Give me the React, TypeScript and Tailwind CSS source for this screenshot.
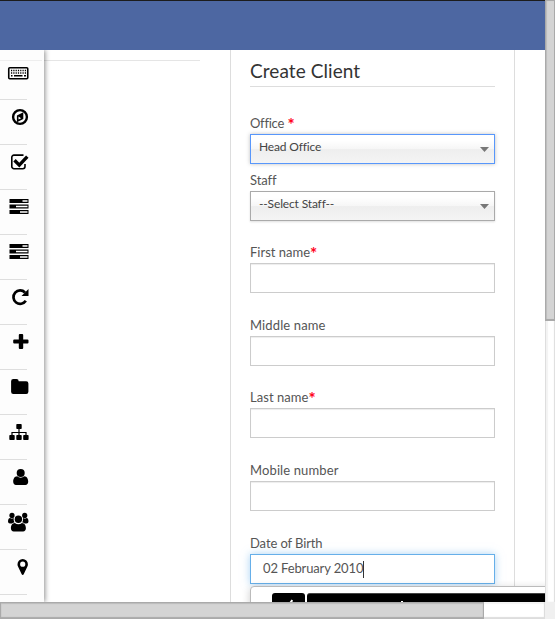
import React from "react";

const Keyboard = () => (
  <>
    <rect x="8.75" y="12.75" width="19" height="11" rx="1" fill="none" stroke="#000" strokeWidth="1.6" />
    <path d="M11 15.500h15M11 18h15" stroke="#000" strokeWidth="1.4" strokeDasharray="1.2 1.1" />
    <path d="M11 20.800h1.500M14 20.800h8.500M24 20.800h2" stroke="#000" strokeWidth="1.400" />
  </>
);

const Compass = () => (
  <>
    <circle cx="20" cy="17" r="6.900" fill="none" stroke="#000" strokeWidth="2.400" />
    <path fillRule="evenodd" d="M23.300 12.200v6.800l-6.400 3.200v-6.800zM18.500 16.600v2.900l2.600-1.300z" />
  </>
);

const Check = () => (
  <>
    <path d="M23.500 10.100H14a2.200 2.200 0 0 0-2.200 2.200v9.200a2.200 2.200 0 0 0 2.200 2.200h8.800a2.200 2.200 0 0 0 2.200-2.200v-2.600" fill="none" stroke="#000" strokeWidth="1.600" />
    <path d="M14.500 15.300l4.800 4.800 8-8.400" fill="none" stroke="#000" strokeWidth="3.400" />
  </>
);

const Tasks = () => (
  <>
    <path d="M9.500 9h19v4h-19zM9.500 14.500h19v4h-19zM9.500 20h19v4h-19z" />
    <path d="M22.500 10.300h5v1.400h-5zM16 15.800h11.500v1.400H16zM20 21.300h7.500v1.400H20z" fill="#fff" />
  </>
);

const Repeat = () => (
  <>
    <path d="M25.800 20.800a6.700 6.700 0 1 1-.8-8.300" fill="none" stroke="#000" strokeWidth="2.700" />
    <path d="M28.500 9v7h-7z" />
  </>
);

const Plus = () => (
  <path d="M19.800 9h2.400q1 0 1 1v4.600h4.300q1 0 1 1v1.900q0 1-1 1h-4.300v4.500q0 1-1 1h-2.400q-1 0-1-1v-4.500h-4.600q-1 0-1-1v-1.900q0-1 1-1h4.600V10q0-1 1-1z" />
);

const Folder = () => (
  <path d="M13.300 9h3.200a2.200 2.200 0 0 1 2.200 2.200h7.500a2.200 2.200 0 0 1 2.200 2.200v8.300a2.200 2.200 0 0 1-2.200 2.200H13.300a2.200 2.200 0 0 1-2.200-2.200V11.200A2.200 2.200 0 0 1 13.300 9z" />
);

const Sitemap = () => (
  <>
    <path d="M19 14v7M12 21v-3.500h14V21" fill="none" stroke="#000" strokeWidth="1.200" />
    <rect x="16.300" y="9" width="5.400" height="5" rx=".8" />
    <rect x="9.300" y="20" width="5.400" height="5" rx=".8" />
    <rect x="16.300" y="20" width="5.400" height="5" rx=".8" />
    <rect x="23.200" y="20" width="5.400" height="5" rx=".8" />
  </>
);

const User = () => (
  <>
    <circle cx="20.700" cy="13" r="4" />
    <path d="M17.200 16.200a5 5 0 0 0 7 0c2.900.2 4 2.800 4 5.600 0 2-1.100 3.200-2.800 3.200h-9.400c-1.700 0-2.800-1.200-2.800-3.200 0-2.800 1.100-5.400 4-5.600z" />
  </>
);

const Users = () => (
  <>
    <circle cx="12" cy="10.400" r="2.600" />
    <circle cx="24.700" cy="10.400" r="2.600" />
    <path d="M10.100 12.900q2.100 1.100 3.600.2-.5 2.200.7 4.500-1.500.1-2.400 1h-2q-2-.1-2-2 0-3.500 2.100-3.700zM26.600 12.900q-2.100 1.100-3.600.2.500 2.200-.7 4.500 1.500.1 2.400 1h1.700q2.100-.1 2.100-2 0-3.500-1.900-3.700z" />
    <circle cx="18.400" cy="14.300" r="3.700" />
    <path d="M14.900 17.900a5 5 0 0 0 7 0c2.900.2 4 2.700 4 5.400 0 2-1.100 3.200-2.800 3.200h-9.400c-1.700 0-2.800-1.200-2.800-3.200 0-2.700 1.100-5.200 4-5.400z" />
  </>
);

const Marker = () => (
  <path fillRule="evenodd" d="M22.700 9a5.200 5.200 0 0 1 5.200 5.200c0 .9-.1 1.500-.5 2.300l-3.700 7.800a1.100 1.100 0 0 1-2 0L18 16.500c-.4-.8-.5-1.400-.5-2.300A5.200 5.200 0 0 1 22.700 9zm0 2.600a2.600 2.600 0 1 0 0 5.200 2.600 2.600 0 0 0 0-5.200z" />
);

const menu = [Keyboard, Compass, Check, Tasks, Tasks, Repeat, Plus, Folder, Sitemap, User, Users, Marker];

function Sidebar() {
  return (
    <nav className="relative h-[552px] w-[44px] shrink-0 bg-[#fdfdfd] pt-[5px] shadow-[1px_0_5px_rgba(0,0,0,0.45)]">
      {menu.map((Icon, i) => (
        <div key={i} className="h-[45px] w-[27px] border-b border-[#dedede]">
          <svg className="block h-[44px] w-[30px] max-w-none overflow-visible" viewBox="0 0 30 44">
            <Icon />
          </svg>
        </div>
      ))}
      <div className="absolute top-[10px] left-0 h-px w-[42px] bg-[#eeeeee]" />
    </nav>
  );
}

const Star = () => <span className="inline-block h-[20px] align-top text-[17px] leading-[26px] font-bold text-[#ff0019]">*</span>;

function Label({ text, required = false, spaced = false, tracking }: { text: string; required?: boolean; spaced?: boolean; tracking: string }) {
  return (
    <div className="h-[22px] text-[13px] leading-[22px] whitespace-pre text-[#555]">
      <span className={tracking}>{text}</span>
      {spaced && " "}
      {required && <Star />}
    </div>
  );
}

function Select({ value, focused = false }: { value: string; focused?: boolean }) {
  return (
    <div
      className={`flex h-[30px] items-center justify-between border bg-[linear-gradient(#fff_20%,#f6f6f6_50%,#eee_52%,#f4f4f4)] pr-[5px] pb-[4px] pl-[8px] ${
        focused ? "border-[#5897fb] shadow-[0_0_4px_rgba(0,0,0,0.25)]" : "border-[#aaa] shadow-[0_1px_2px_rgba(0,0,0,0.13)]"
      }`}
    >
      <span className="text-[12px] leading-[20px] tracking-[-0.15px] text-[#444]">{value}</span>
      <svg className="mt-[4px] h-[5px] w-[9px]" viewBox="0 0 9 5">
        <path d="M0 0h9L4.500 5z" fill="#777" />
      </svg>
    </div>
  );
}

const Field = () => <div className="h-[30px] border border-[#ccc] bg-white shadow-[inset_0_1px_1px_rgba(0,0,0,0.075)]" />;

export default function App() {
  return (
    <div className="h-[619px] w-[555px] overflow-hidden bg-white font-['Lato',sans-serif]">
      <div className="flex h-[602px]">
        <div className="h-[602px] w-[545px] overflow-hidden">
          <header className="relative z-10 h-[50px] border-t border-[#1c1c1c] bg-[#4d67a2]" />
          <div className="flex h-[552px]">
            <Sidebar />
            <div className="w-[186px] shrink-0 pt-[10px]">
              <div className="h-px w-[156px] bg-[#e5e5e5]" />
            </div>
            <main className="w-[285px] shrink-0 border-x border-[#ddd] px-[19px]">
              <h1 className="h-[37px] border-b border-[#ddd] pt-[9px] text-[19px] leading-[24px] tracking-[0.08px] whitespace-nowrap text-[#333]">Create Client</h1>
              <div className="pt-[25px]">
                <Label text="Office" required spaced tracking="tracking-[-0.25px]" />
                <Select value="Head Office" focused />
              </div>
              <div className="pt-[5px]">
                <Label text="Staff" tracking="tracking-[-0.1px]" />
                <Select value="--Select Staff--" />
              </div>
              <div className="pt-[20px]">
                <Label text="First name" required tracking="tracking-[0px]" />
                <Field />
              </div>
              <div className="pt-[21px]">
                <Label text="Middle name" tracking="tracking-[0.13px]" />
                <Field />
              </div>
              <div className="pt-[20px]">
                <Label text="Last name" required tracking="tracking-[0.05px]" />
                <Field />
              </div>
              <div className="pt-[21px]">
                <Label text="Mobile number" tracking="tracking-[0.12px]" />
                <Field />
              </div>
              <div className="pt-[21px]">
                <Label text="Date of Birth" tracking="tracking-[-0.1px]" />
                <div className="flex h-[30px] items-center border border-[#66afe9] bg-white pl-[12px] shadow-[0_0_8px_rgba(102,175,233,0.55)]">
                  <span className="text-[13px] tracking-[-0.13px] whitespace-nowrap text-[#555]">02 February 2010</span>
                  <span className="h-[17px] w-px bg-[#333]" />
                </div>
              </div>
              <div className="relative mt-[2px] flex h-[40px] w-[340px] gap-[2px] rounded-[4px] border border-[#bbb] bg-white pt-[6px] pl-[21px] shadow-[0_2px_8px_rgba(0,0,0,0.2)]">
                <div className="flex h-[33px] w-[33px] justify-center rounded-t-[3px] bg-black">
                  <svg className="ml-[5px] h-[14px] w-[12px]" viewBox="0 0 12 14">
                    <path d="M6.500 6.500l1.500 1-1 2.500H4z" fill="#fff" />
                  </svg>
                </div>
                <div className="flex h-[33px] flex-1 rounded-tl-[3px] border-t border-[#444] bg-black pl-[94px]">
                  <span className="mt-[7px] h-[2px] w-[2px] bg-white" />
                </div>
              </div>
            </main>
          </div>
        </div>
        <div className="h-[602px] w-[10px] border-l border-[#dedede] bg-white shadow-[inset_2px_0_1px_#f3f3f3,inset_-1px_0_1px_#ddd]">
          <div className="-ml-px h-[321px] w-[10px] border-x border-t border-b-2 border-[#aaa] bg-[#d4d4d4] shadow-[inset_1px_0_1px_#bcbcbc]" />
        </div>
      </div>
      <div className="flex h-[17px]">
        <div className="h-[17px] w-[545px] border-r border-[#ddd] bg-white shadow-[inset_0_-2px_1px_#ddd,inset_0_2px_1px_#f3f3f3]">
          <div className="h-[17px] w-[484px] border border-[#aaa] bg-[#d4d4d4] shadow-[inset_0_1px_1px_#bbb,inset_0_-1px_1px_#aaa]" />
        </div>
        <div className="flex-1 bg-[#f0f0f0]" />
      </div>
    </div>
  );
}
